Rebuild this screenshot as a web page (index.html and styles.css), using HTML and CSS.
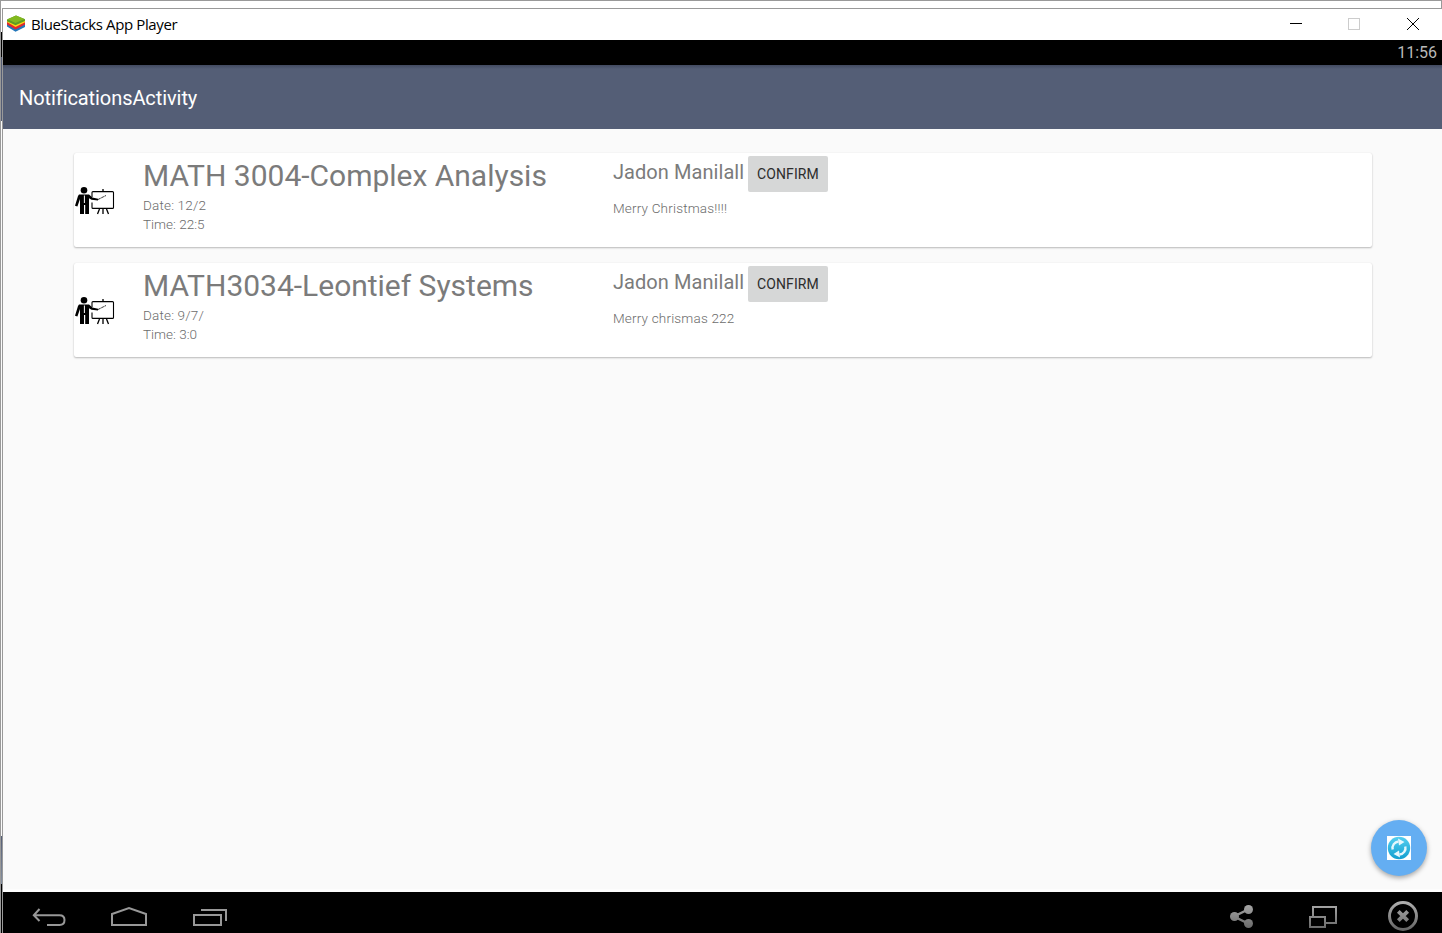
FILE: index.html
```html
<!DOCTYPE html>
<html lang="en">
<head>
<meta charset="utf-8">
<title>BlueStacks App Player</title>
<link rel="stylesheet" href="styles.css">
</head>
<body>
<svg class="defs" width="0" height="0">
  <defs>
    <linearGradient id="metal" x1="0" y1="901" x2="0" y2="932" gradientUnits="userSpaceOnUse"><stop offset="0" stop-color="#b0b0b0"/><stop offset="1" stop-color="#606060"/></linearGradient>
    <linearGradient id="aqua" x1="0" y1="0" x2="0" y2="1"><stop offset="0" stop-color="#55cff0"/><stop offset="1" stop-color="#129fd0"/></linearGradient>
    <symbol id="teacher" viewBox="0 0 40 28">
      <circle cx="9" cy="3.300" r="3.300"/>
      <path d="M4 7.600h10l3.400 3 5.600 1.200v1.800l-6.500-.8-2.500-1.600V27h-3.800v-9H9v9H5V12l-2.600 7.500L0 18.700 3 9z"/>
      <path d="M9.400 8.500v7.500" stroke="#fff" stroke-width="1"/>
      <path d="M20 4.600h17.500q1 0 1 1v14.800q0 1-1 1H18q-1 0-1-1v-5M17 10V5.600q0-1 1-1h2" fill="none" stroke="#000" stroke-width="1.100"/>
      <path d="M28 2v2.500M24.500 22l-2 5M28 22v5M31.500 22l2 5" fill="none" stroke="#000" stroke-width="1.300"/>
      <path d="M23 12.500l8-4" fill="none" stroke="#222" stroke-width=".9" stroke-dasharray="3 .6"/>
    </symbol>
  </defs>
</svg>
<div class="desktop">
  <div class="behind-top"></div>
  <div class="behind-left"></div>
  <main class="window">
    <header class="titlebar">
      <svg class="logo" width="20" height="18" viewBox="6 15 20 18">
        <path d="M7 26.500l8.500 5.200 9.500-4.700v-3l-9-3-9 3z" fill="#2377ba"/>
        <path d="M7 24.500l8.500 5 9.500-5v-2.200l-9-3-9 3z" fill="#e3282c"/>
        <path d="M7 22l8.500 5L25 22.300V20l-9-3-9 3z" fill="#fbd515"/>
        <path d="M7 19.500l9-4 9 3.800v1.700l-9.500 4.300L7 21.200z" fill="#5e9c22"/>
        <path d="M7.500 19.300l8.500-3.800 8.500 3.600-9 4z" fill="#83b91e"/>
      </svg>
      <span class="window-title">BlueStacks App Player</span>
      <svg class="controls" width="132" height="16" viewBox="1288 16 132 16" fill="none" shape-rendering="crispEdges">
        <path d="M1290 23.500h12" stroke="#000"/>
        <rect x="1348.500" y="18.500" width="11" height="11" stroke="#ccc"/>
        <path d="M1407 18l12 12M1419 18l-12 12" stroke="#000" stroke-width="1" shape-rendering="auto"/>
      </svg>
    </header>
    <div class="statusbar">11:56</div>
    <div class="appbar">NotificationsActivity</div>
    <section class="content">
      <article class="card">
        <svg class="teacher" width="40" height="28"><use href="#teacher"/></svg>
        <div class="course">
          <div class="course-name">MATH 3004-Complex Analysis</div>
          <div class="small">Date: 12/2</div>
          <div class="small time">Time: 22:5</div>
        </div>
        <div class="message">
          <div class="sender"><span class="name">Jadon Manilall</span><button class="confirm">CONFIRM</button></div>
          <div class="small note">Merry Christmas!!!!</div>
        </div>
      </article>
      <article class="card">
        <svg class="teacher" width="40" height="28"><use href="#teacher"/></svg>
        <div class="course">
          <div class="course-name">MATH3034-Leontief Systems</div>
          <div class="small">Date: 9/7/</div>
          <div class="small time">Time: 3:0</div>
        </div>
        <div class="message">
          <div class="sender"><span class="name">Jadon Manilall</span><button class="confirm">CONFIRM</button></div>
          <div class="small note">Merry chrismas 222</div>
        </div>
      </article>
      <div class="fab">
        <svg width="24" height="24" viewBox="0 0 24 24">
          <path d="M0 0h24v24H0z" fill="#fff"/>
          <circle cx="12" cy="12" r="11.200" fill="url(#aqua)"/>
          <path d="M5.700 13.500a6.500 6.500 0 0 1 5.800-8M18.300 10.500a6.500 6.500 0 0 1-5.800 8" fill="none" stroke="#e5f7fd" stroke-width="2.400"/>
          <path d="M11 2.500l6.500 3.400-5.500 3.600zM13 21.500l-6.500-3.400 5.500-3.600z" fill="#e5f7fd"/>
        </svg>
      </div>
    </section>
    <nav class="navbar">
      <svg width="200" height="33" viewBox="30 900 200 33" fill="none" stroke="#989898" stroke-width="2">
        <path d="M39.500 909l-5.700 6.200 5.700 5.800M34 915.200h25.500q5 0 5 4.900t-5 4.900H47"/>
        <path d="M112 925v-11l17-6 17 6v11z"/>
        <path d="M194 915h27v10h-27zM201 910h25v11"/>
      </svg>
      <svg width="192" height="33" viewBox="1228 900 192 33" fill="none" stroke="url(#metal)" stroke-width="2">
        <path d="M1248 909.500l-14 7 14 7" stroke-width="2.500"/>
        <g fill="url(#metal)" stroke="none"><circle cx="1248.500" cy="909.500" r="4.500"/><circle cx="1234.500" cy="916.500" r="4.500"/><circle cx="1248.500" cy="923.500" r="4.500"/></g>
        <path d="M1313 916v-9h23v16h-10M1310 917h15v10h-15z"/>
        <circle cx="1403" cy="916" r="13.500" stroke-width="3"/>
        <path d="M1398.300 911.300l9.400 9.400M1407.700 911.300l-9.400 9.400" stroke-width="3.800"/>
      </svg>
    </nav>
  </main>
</div>
</body>
</html>
```
FILE: styles.css
```css
* { box-sizing: border-box; }
body { margin: 0; width: 1442px; height: 933px; overflow: hidden; font-family: Roboto, sans-serif; }
.defs { position: absolute; }
.desktop { display: grid; grid-template: 8px 925px / 2px 1440px; }
.behind-top { grid-column: 1 / 3; border: 1px solid #999; border-bottom: 0; background: #fff; }
.behind-left {
  border-left: 1px solid #999;
  background: linear-gradient(#fff 24px, #000 24px 49px, #555e76 49px 113px, #fafafa 113px 828px, #555e76 828px, #8590a0 876px, #000 876px);
}
.window { display: flex; flex-direction: column; border-top: 1px solid #999; border-left: 1px solid #999; }
.titlebar { flex: none; display: flex; align-items: center; height: 31px; padding: 0 22px 2px 3px; background: #fff; }
.logo { margin-right: 5px; }
.window-title { font: 15px/20px "Open Sans", sans-serif; letter-spacing: -.37px; color: #000; }
.controls { margin-left: auto; }
.statusbar { flex: none; height: 25px; padding-right: 5px; background: #000; color: #b8b8b8; font-size: 16px; line-height: 26px; text-align: right; }
.appbar { flex: none; height: 64px; padding-left: 16px; background: linear-gradient(#424a60, #545e76 4px); color: #fff; font-size: 20px; line-height: 66px; letter-spacing: -.08px; }
.content { position: relative; flex: none; height: 763px; padding: 24px 70px 0 71px; background: #fafafa; border-bottom: 3px solid #fdfdfd; }
.card { display: flex; height: 94px; margin-bottom: 16px; border-radius: 2px; background: #fff; box-shadow: 0 1px 2px rgba(0,0,0,.26), 0 0 1px rgba(0,0,0,.1); color: #7b7b7b; }
.teacher { flex: none; margin: 34px 0 0 1px; }
.course { flex: none; width: 470px; margin-left: 28px; padding-top: 5px; }
.course-name { height: 38px; font-size: 30px; line-height: 36px; white-space: nowrap; letter-spacing: -.01px; }
.small { color: #6c6c6c; font-size: 13.5px; font-weight: 300; line-height: 19px; letter-spacing: .18px; }
.time { letter-spacing: 0; }
.message { padding-top: 3px; }
.sender { display: flex; height: 36px; }
.name { width: 135px; font-size: 20px; line-height: 33px; letter-spacing: .06px; white-space: nowrap; }
.confirm { width: 80px; height: 36px; padding: 0; border: 0; border-radius: 2px; background: #d6d7d7; color: #2c2c2c; font: 14px/36px Roboto, sans-serif; letter-spacing: .1px; }
.note { padding-top: 7px; }
.fab { position: absolute; right: 15px; bottom: 13px; display: grid; place-items: center; width: 56px; height: 56px; border-radius: 50%; background: #64aef2; box-shadow: 0 2px 5px rgba(0,0,0,.35); }
.navbar { flex: none; display: flex; justify-content: space-between; height: 41px; padding: 8px 22px 0 27px; background: #000; }
```
